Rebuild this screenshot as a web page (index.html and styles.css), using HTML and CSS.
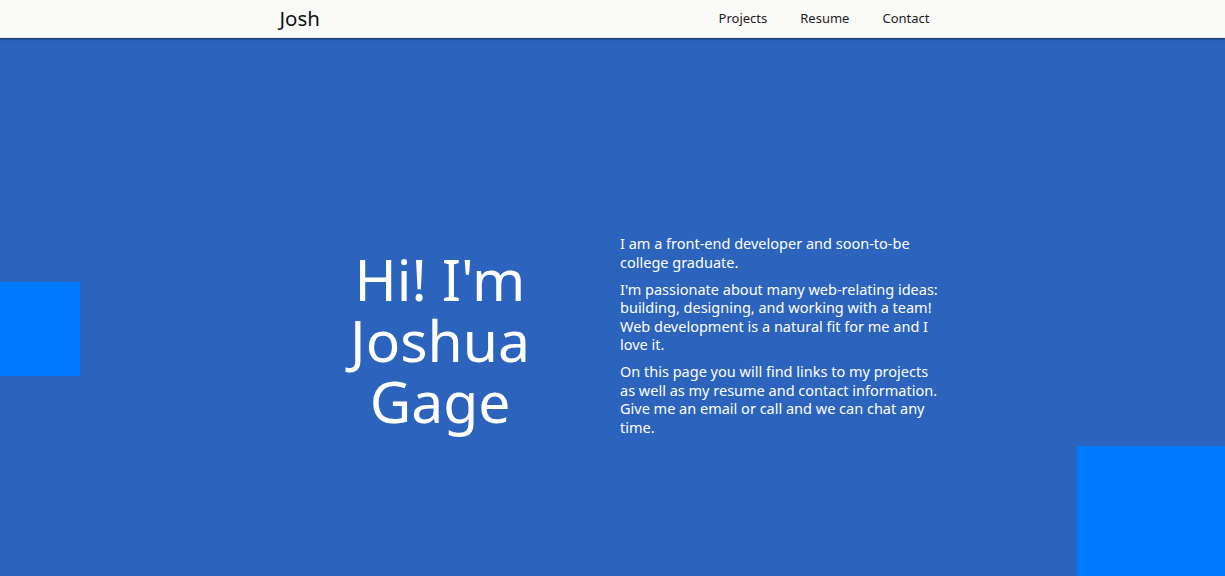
FILE: index.html
```html
<!DOCTYPE html>
<html lang="en">
<head>
<meta charset="utf-8">
<title>Josh</title>
<link rel="stylesheet" href="styles.css">
</head>
<body>
<header class="navbar">
  <div class="nav-inner">
    <a class="brand" href="#">Josh</a>
    <nav class="nav-links">
      <a href="#">Projects</a>
      <a href="#">Resume</a>
      <a href="#">Contact</a>
    </nav>
  </div>
</header>
<main class="hero">
  <div class="square square-left"></div>
  <div class="square square-right"></div>
  <div class="hero-inner">
    <h1 class="hero-title">Hi! I'm<br>Joshua<br>Gage</h1>
    <div class="hero-text">
      <p>I am a front-end developer and soon-to-be college graduate.</p>
      <p>I'm passionate about many web-relating ideas: building, designing, and working with a team! Web development is a natural fit for me and I love it.</p>
      <p>On this page you will find links to my projects as well as my resume and contact information. Give me an email or call and we can chat any time.</p>
    </div>
  </div>
</main>
</body>
</html>
```
FILE: styles.css
```css
* { box-sizing: border-box; }
html, body { margin: 0; padding: 0; height: 100%; overflow: hidden; }
body {
  font-family: "Noto Sans", "Open Sans", sans-serif;
  background: #2b63bd;
  color: #fff;
}
.navbar {
  position: relative;
  z-index: 2;
  height: 38px;
  background: #fafaf8;
  border-bottom: 1px solid #f3ecdf;
  box-shadow: 0 1px 2px rgba(0,0,0,0.55);
}
.nav-inner {
  width: 672px;
  margin: 0 auto;
  height: 100%;
  display: flex;
  align-items: center;
  justify-content: space-between;
  padding-left: 3px;
  padding-right: 19px;
}
.brand {
  color: #111;
  text-decoration: none;
  font-size: 20.5px;
  line-height: 1;
  margin-top: -1px;
}
.nav-links {
  display: flex;
  gap: 33px;
  margin-top: -1px;
}
.nav-links a {
  color: #1c1c1c;
  text-decoration: none;
  font-size: 13px;
}
.hero {
  position: relative;
  height: calc(100% - 38px);
  display: flex;
  justify-content: center;
  padding-top: 196px;
}
.square {
  position: absolute;
  background: #007aff;
}
.square-left { left: 0; top: 244px; width: 80px; height: 94px; }
.square-right { left: 1077px; top: 408px; width: 160px; height: 160px; }
.hero-inner {
  display: flex;
  gap: 40px;
  align-items: flex-start;
  margin-left: 17px;
}
.hero-title {
  width: 280px;
  margin: 0;
  margin-top: 15px;
  text-align: center;
  font-weight: 400;
  font-size: 57px;
  line-height: 61px;
}
.hero-text {
  width: 322px;
  font-size: 14.5px;
  line-height: 18.5px;
}
.hero-text p { margin: 0 0 8.5px; }
```
